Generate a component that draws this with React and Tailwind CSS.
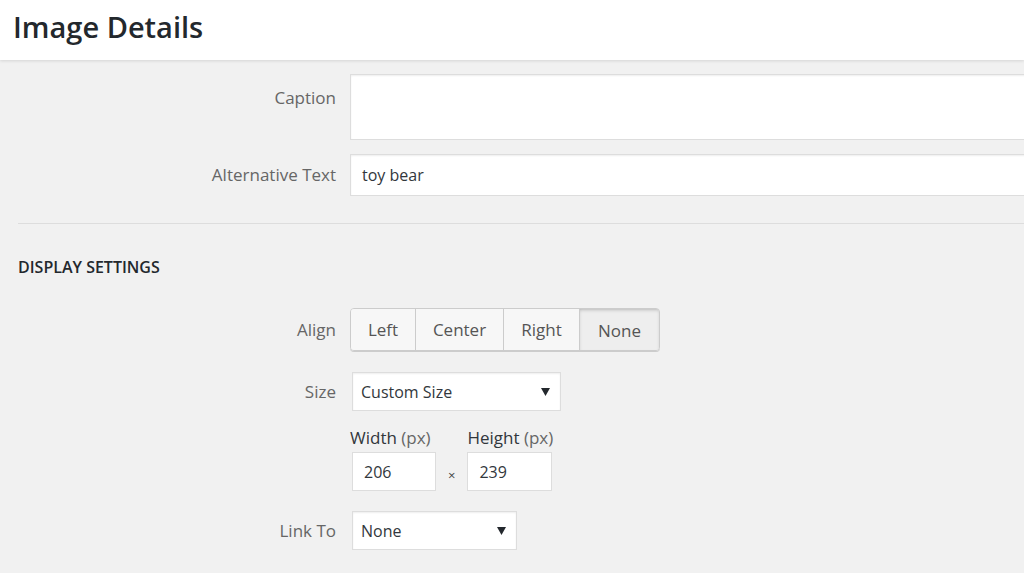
import { useState } from 'react'

const font = { fontFamily: '"Open Sans", "Noto Sans", sans-serif' }

function Label({ children, className = '' }) {
  return (
    <div className={`w-[350px] shrink-0 pr-[14px] text-right text-[17px] text-[#666] ${className}`}>
      {children}
    </div>
  )
}

function Select({ value, width }) {
  return (
    <div
      className={`flex h-[39px] items-center justify-between border border-[#ddd] bg-white pl-[8px] pr-[10px] text-[16px] text-[#32373c] shadow-[inset_0_1px_2px_rgba(0,0,0,0.07)] ${width}`}
    >
      <span>{value}</span>
      <svg width="9" height="8" viewBox="0 0 9 8">
        <path d="M0 0h9L4.5 8z" fill="#23282d" />
      </svg>
    </div>
  )
}

export default function App() {
  const [align, setAlign] = useState('none')
  const aligns = [
    { id: 'left', text: 'Left', w: 'w-[64px]' },
    { id: 'center', text: 'Center', w: 'w-[88px]' },
    { id: 'right', text: 'Right', w: 'w-[76px]' },
    { id: 'none', text: 'None', w: 'w-[80px]' },
  ]

  return (
    <div className="h-[573px] w-[1024px] overflow-hidden bg-[#f1f1f1]" style={font}>
      {/* 顶栏 */}
      <div className="relative z-10 flex h-[60px] items-center bg-white pl-[13px] shadow-[0_1px_3px_rgba(0,0,0,0.12)]">
        <h1 className="pb-[8px] text-[29px] font-semibold leading-none text-[#23282d]">Image Details</h1>
      </div>

      <div className="pt-[14px]">
        <div className="flex">
          <Label className="pt-[11px]">Caption</Label>
          <div className="-mr-[4px] h-[66px] flex-1 border border-[#ddd] bg-white shadow-[inset_0_1px_2px_rgba(0,0,0,0.07)]" />
        </div>

        <div className="mt-[14px] flex items-center">
          <Label>Alternative Text</Label>
          <div className="-mr-[4px] flex h-[42px] flex-1 items-center border border-[#ddd] bg-white pl-[11px] text-[16px] text-[#32373c] shadow-[inset_0_1px_2px_rgba(0,0,0,0.07)]">
            toy bear
          </div>
        </div>

        <div className="ml-[18px] mt-[27px] border-t border-[#ddd]" />

        <h2 className="ml-[18px] mt-[35px] text-[16px] font-semibold uppercase leading-none text-[#23282d]">
          Display Settings
        </h2>

        <div className="mt-[33px] flex items-center">
          <Label>Align</Label>
          <div className="flex h-[43px] overflow-hidden rounded-[4px] border border-[#ccc] shadow-[0_1px_0_#ccc]">
            {aligns.map((a, i) => (
              <button
                key={a.id}
                type="button"
                onClick={() => setAlign(a.id)}
                className={`${a.w} text-[17px] text-[#555] ${i > 0 ? 'border-l border-[#ccc]' : ''} ${
                  align === a.id
                    ? 'bg-[#eee] pt-[3px] shadow-[inset_0_2px_5px_-3px_rgba(0,0,0,0.5)]'
                    : 'bg-[#f7f7f7]'
                }`}
              >
                {a.text}
              </button>
            ))}
          </div>
        </div>

        <div className="mt-[21px] flex items-center">
          <Label>Size</Label>
          <div className="ml-[2px]">
            <Select value="Custom Size" width="w-[209px]" />
          </div>
        </div>

        <div className="ml-[350px] mt-[18px] flex items-end text-[17px] text-[#32373c]">
          <div className="flex flex-col">
            <span className="leading-none">
              Width <span className="text-[#666]">(px)</span>
            </span>
            <div className="ml-[2px] mt-[6px] flex h-[39px] w-[84px] items-center border border-[#ddd] bg-white pl-[11px] text-[16px] text-[#32373c]">
              206
            </div>
          </div>
          <span className="mx-[12px] mb-[6px] text-[13px] text-[#444]">×</span>
          <div className="flex flex-col">
            <span className="leading-none">
              Height <span className="text-[#666]">(px)</span>
            </span>
            <div className="mt-[6px] flex h-[39px] w-[85px] items-center border border-[#ddd] bg-white pl-[11px] text-[16px] text-[#32373c]">
              239
            </div>
          </div>
        </div>

        <div className="mt-[20px] flex items-center">
          <Label>Link To</Label>
          <div className="ml-[2px]">
            <Select value="None" width="w-[165px]" />
          </div>
        </div>
      </div>
    </div>
  )
}
